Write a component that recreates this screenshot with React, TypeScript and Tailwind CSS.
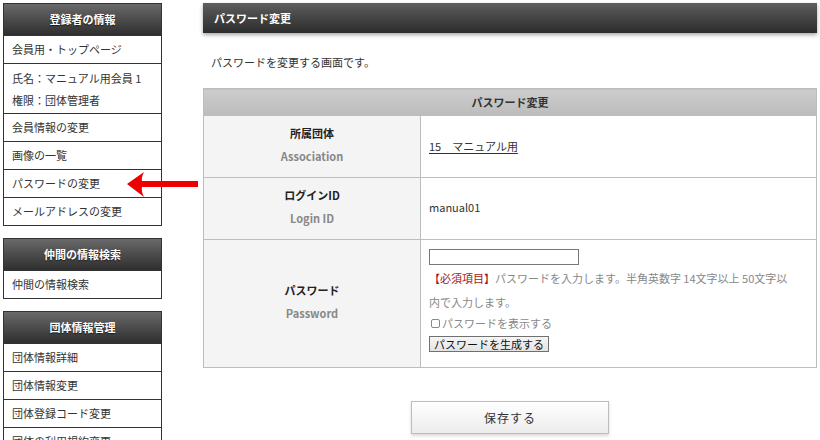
import React from "react";

/* ── Sidebar ──────────────────────────────────────────────────────────── */

type SideItem = { lines: string[] };

function SideBox({
  title,
  items,
  className = "",
}: {
  title: string;
  items: SideItem[];
  className?: string;
}) {
  return (
    <div className={`border border-[#333] bg-white ${className}`}>
      <div className="flex h-[31px] items-center justify-center bg-gradient-to-b from-[#6a6a6a] to-[#2f2f2f] text-[11px] font-bold text-white [text-shadow:0_1px_1px_rgba(0,0,0,0.6)]">
        {title}
      </div>
      {items.map((it, i) => (
        <div
          key={i}
          className={`flex flex-col justify-center border-t border-[#333] px-[8px] text-[11px] text-[#333] ${
            it.lines.length > 1 ? "h-[50px] leading-[22px]" : "h-[28px]"
          }`}
        >
          {it.lines.map((l) => (
            <span key={l}>{l}</span>
          ))}
        </div>
      ))}
    </div>
  );
}

/* ── Form table rows ──────────────────────────────────────────────────── */

function Label({ ja, en }: { ja: string; en: string }) {
  return (
    <td className="w-[217px] border border-[#bdbdbd] bg-[#f4f4f4] pb-[3px] text-center align-middle">
      <div className="text-[11px] font-bold leading-[23px] text-[#222]">{ja}</div>
      <div className="text-[11px] font-bold leading-[23px] text-[#888]">{en}</div>
    </td>
  );
}

export default function App() {
  return (
    <div
      className="relative flex h-[440px] w-[820px] overflow-hidden bg-white p-[3px]"
      style={{ fontFamily: '"Noto Sans CJK JP", "Noto Sans", sans-serif' }}
    >
      {/* Left: member menus */}
      <div className="w-[159px] shrink-0">
        <SideBox
          title="登録者の情報"
          items={[
            { lines: ["会員用・トップページ"] },
            { lines: ["氏名：マニュアル用会員 1", "権限：団体管理者"] },
            { lines: ["会員情報の変更"] },
            { lines: ["画像の一覧"] },
            { lines: ["パスワードの変更"] },
            { lines: ["メールアドレスの変更"] },
          ]}
        />
        <SideBox
          className="mt-[12px]"
          title="仲間の情報検索"
          items={[{ lines: ["仲間の情報検索"] }]}
        />
        <SideBox
          className="mt-[12px]"
          title="団体情報管理"
          items={[
            { lines: ["団体情報詳細"] },
            { lines: ["団体情報変更"] },
            { lines: ["団体登録コード変更"] },
            { lines: ["団体の利用規約変更"] },
          ]}
        />
      </div>

      {/* Right: password form */}
      <div className="ml-[41px] flex w-[614px] flex-col">
        <div className="flex h-[30px] items-center bg-gradient-to-b from-[#5e5e5e] to-[#2c2c2c] px-[11px] text-[11px] font-bold text-white shadow-[0_2px_4px_rgba(0,0,0,0.35)]">
          パスワード変更
        </div>
        <p className="mt-[20px] pl-[8px] text-[11px] leading-[18px] text-[#333]">
          パスワードを変更する画面です。
        </p>

        <table className="mt-[17px] w-full border-collapse border border-[#bdbdbd]">
          <tbody>
            <tr className="h-[27px]">
              <th
                colSpan={2}
                className="border border-[#bdbdbd] bg-gradient-to-b from-[#cdcdcd] to-[#bcbcbc] text-center text-[11px] font-bold text-[#333]"
              >
                パスワード変更
              </th>
            </tr>
            <tr className="h-[62px]">
              <Label ja="所属団体" en="Association" />
              <td className="border border-[#bdbdbd] px-[8px] align-middle text-[11px] text-[#333]">
                <a className="underline underline-offset-2">15　マニュアル用</a>
              </td>
            </tr>
            <tr className="h-[62px]">
              <Label ja="ログインID" en="Login ID" />
              <td className="border border-[#bdbdbd] px-[8px] pb-[3px] align-middle text-[11px] text-[#333]">
                manual01
              </td>
            </tr>
            <tr className="h-[128px]">
              <Label ja="パスワード" en="Password" />
              <td className="border border-[#bdbdbd] px-[8px] pb-[13px] pt-[9px] align-top text-[11px]">
                <div className="h-[16px] w-[150px] border border-[#777] bg-white" />
                <p className="mt-[1px] max-w-[364px] leading-[24px] text-[#888]">
                  <span className="text-[#a51616]">【必須項目】</span>
                  パスワードを入力します。半角英数字 14文字以上 50文字以内で入力します。
                </p>
                <div className="-mt-[1px] flex h-[20px] items-center text-[#888]">
                  <span className="ml-[2px] mr-[2px] inline-block h-[9px] w-[9px] rounded-[2px] border border-[#888]" />
                  パスワードを表示する
                </div>
                <button className="mt-[3px] flex h-[16px] items-center border border-[#707070] bg-gradient-to-b from-[#f6f6f6] to-[#e3e3e3] px-[4px] text-[11px] text-[#111]">
                  パスワードを生成する
                </button>
              </td>
            </tr>
          </tbody>
        </table>

        <button className="mx-auto mt-[33px] flex h-[33px] w-[198px] items-center justify-center border border-[#bdbdbd] bg-gradient-to-b from-[#ffffff] to-[#ececec] text-[12px] tracking-[1px] text-[#333] shadow-[0_2px_3px_rgba(0,0,0,0.15)]">
          保存する
        </button>
      </div>

      {/* Annotation arrow over the menu */}
      <svg
        className="absolute left-[125px] top-[170px]"
        width="76"
        height="30"
        viewBox="0 0 76 30"
      >
        <path
          d="M2 14 L19 2 Q16 8 17 11 L73 11 L73 17 L17 17 Q16 21 19 27 Z"
          fill="#ee0000"
        />
      </svg>
    </div>
  );
}
